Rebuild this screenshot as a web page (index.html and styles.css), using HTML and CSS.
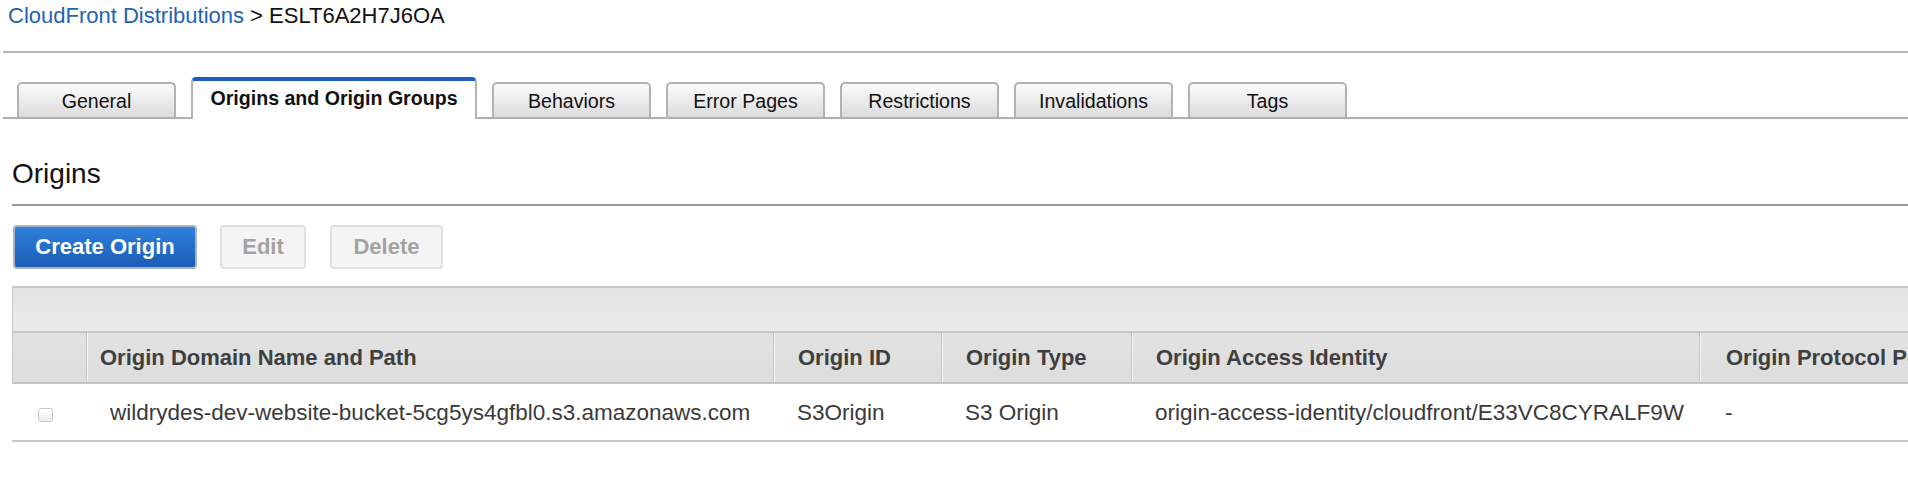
FILE: index.html
```html
<!DOCTYPE html>
<html lang="en">
<head>
<meta charset="utf-8">
<title>CloudFront Distributions</title>
<link rel="stylesheet" href="styles.css">
</head>
<body>
<div class="page">
  <div class="breadcrumb"><a class="crumb-link" href="#">CloudFront Distributions</a> &gt; ESLT6A2H7J6OA</div>
  <div class="rule"></div>
  <div class="tabs">
    <div class="tab">General</div>
    <div class="tab active">Origins and Origin Groups</div>
    <div class="tab">Behaviors</div>
    <div class="tab">Error Pages</div>
    <div class="tab">Restrictions</div>
    <div class="tab">Invalidations</div>
    <div class="tab">Tags</div>
  </div>
  <h2 class="section-title">Origins</h2>
  <div class="actions">
    <button class="btn btn-primary">Create Origin</button>
    <button class="btn btn-disabled btn-edit">Edit</button>
    <button class="btn btn-disabled btn-delete">Delete</button>
  </div>
  <div class="grid">
    <div class="grid-toolbar"></div>
    <div class="grid-head">
      <div class="cell c0"></div>
      <div class="cell c1 first-head">Origin Domain Name and Path</div>
      <div class="cell c2">Origin ID</div>
      <div class="cell c3">Origin Type</div>
      <div class="cell c4">Origin Access Identity</div>
      <div class="cell c5">Origin Protocol Policy</div>
    </div>
    <div class="grid-row">
      <div class="cell c0"><span class="checkbox"></span></div>
      <div class="cell c1">wildrydes-dev-website-bucket-5cg5ys4gfbl0.s3.amazonaws.com</div>
      <div class="cell c2">S3Origin</div>
      <div class="cell c3">S3 Origin</div>
      <div class="cell c4">origin-access-identity/cloudfront/E33VC8CYRALF9W</div>
      <div class="cell c5">-</div>
    </div>
  </div>
</div>
</body>
</html>
```

FILE: styles.css
```css
html, body {
  margin: 0;
  padding: 0;
  overflow: hidden;
  background: #fff;
}
body {
  font-family: "Liberation Sans", Arial, Helvetica, sans-serif;
  color: #000;
}
.page {
  width: 1908px;
  height: 496px;
  overflow: hidden;
}
.breadcrumb {
  padding: 2px 0 0 8px;
  font-size: 22px;
  line-height: 28px;
  color: #111;
  white-space: nowrap;
}
.crumb-link {
  color: #1f63b8;
  text-decoration: none;
}
.rule {
  margin: 21px 0 0 3px;
  height: 0;
  border-top: 2px solid #b8b8b8;
}
.tabs {
  display: flex;
  align-items: flex-end;
  gap: 15px;
  margin: 24px 0 0 3px;
  padding-left: 14px;
  border-bottom: 2px solid #b0b0b0;
  height: 40px;
}
.tab {
  box-sizing: border-box;
  width: 159px;
  height: 35px;
  border: 2px solid #b3b3b3;
  border-bottom: none;
  border-radius: 5px 5px 0 0;
  background: linear-gradient(#fbfbfb, #dcdcdc);
  font-size: 19.6px;
  color: #111;
  display: flex;
  align-items: center;
  justify-content: center;
  padding-top: 2px;
  white-space: nowrap;
}
.tab.active {
  width: 286px;
  height: 42px;
  margin-bottom: -2px;
  border-top: 4px solid #1f5fbf;
  background: #fff;
  font-weight: bold;
  padding-top: 0;
  padding-bottom: 3px;
}
.section-title {
  margin: 39px 0 0 12px;
  padding-bottom: 14px;
  font-size: 28px;
  line-height: 32px;
  font-weight: normal;
  color: #111;
  border-bottom: 2px solid #9a9a9a;
}
.actions {
  display: flex;
  gap: 23px;
  margin: 19px 0 0 13px;
}
.btn {
  box-sizing: border-box;
  height: 44px;
  border-radius: 4px;
  font-family: inherit;
  font-size: 22px;
  font-weight: bold;
  padding: 0;
}
.btn-primary {
  width: 184px;
  color: #fff;
  border: 2px solid #a9b4c2;
  background: linear-gradient(#2f80dd, #1a5db5);
}
.btn-disabled {
  color: #a3a3a3;
  border: 2px solid #e0e0e0;
  background: #f4f4f4;
}
.btn-edit { width: 86px; }
.btn-delete { width: 113px; margin-left: 1px; }
.grid {
  margin: 17px 0 0 12px;
  width: 2100px;
}
.grid-toolbar {
  height: 43px;
  border-top: 2px solid #cacaca;
  border-left: 1px solid #cacaca;
  border-bottom: 2px solid #c6c6c6;
  background: linear-gradient(#e3e3e3, #ebebeb);
}
.grid-head {
  display: flex;
  height: 49px;
  border-left: 1px solid #cacaca;
  border-bottom: 2px solid #c6c6c6;
  background: linear-gradient(#e2e2e2, #dddddd);
  font-weight: bold;
  color: #3f3f3f;
}
.grid-head .cell {
  font-size: 22px;
}
.grid-row {
  display: flex;
  height: 56px;
  border-bottom: 2px solid #c8c8c8;
  color: #3a3a3a;
}
.grid-row .cell {
  padding-top: 2px;
}
.cell {
  box-sizing: border-box;
  display: flex;
  align-items: center;
  padding-left: 24px;
  font-size: 22.5px;
  white-space: nowrap;
  flex: none;
}
.grid-head .cell + .cell {
  border-left: 1px solid #c4c4c4;
  box-shadow: inset 1px 0 0 #f6f6f6;
}
.grid-head .first-head { padding-left: 13px; }
.c0 { width: 74px; padding-left: 26px; }
.grid-head .c0 { width: 73px; }
.c1 { width: 687px; }
.c2 { width: 168px; }
.c3 { width: 190px; }
.c4 { width: 568px; }
.c5 { width: 400px; padding-left: 26px; }
.checkbox {
  box-sizing: border-box;
  width: 15px;
  height: 14px;
  border: 1px solid #c9c9c9;
  border-radius: 3px;
  background: linear-gradient(#fff, #ececec);
  margin-top: 3px;
}
```
